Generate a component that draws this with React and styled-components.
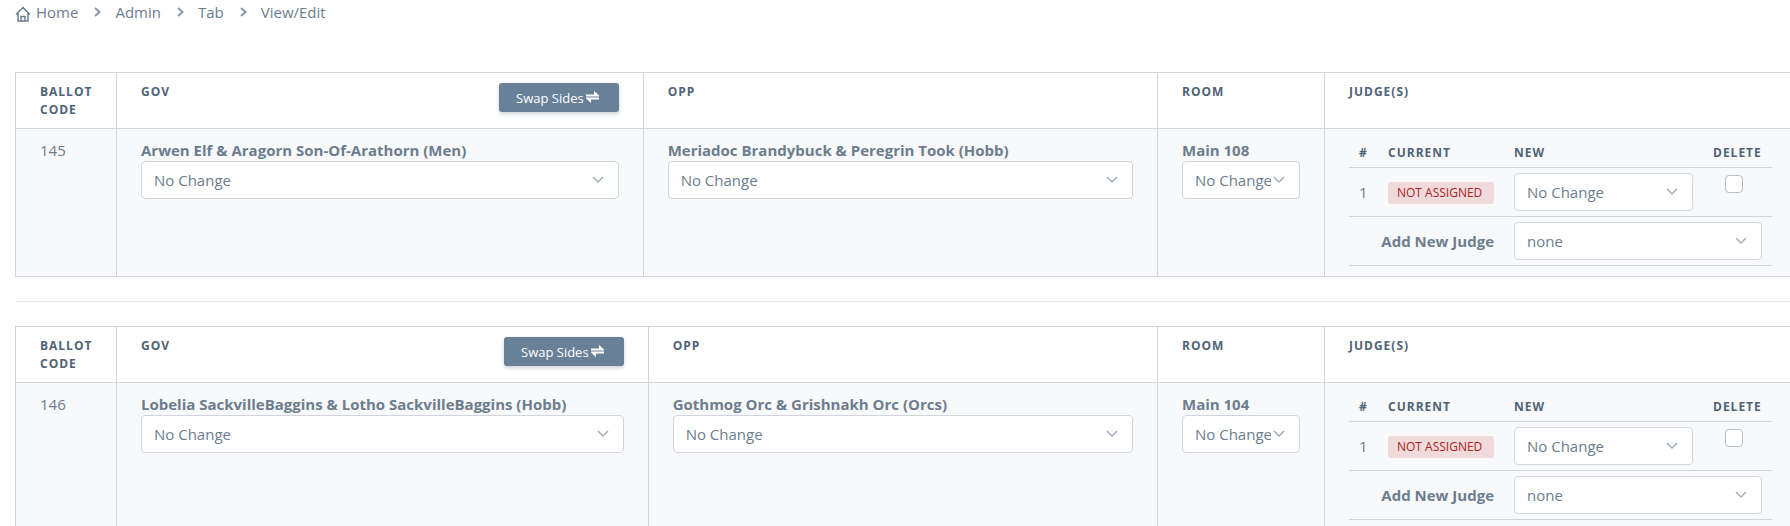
import { useId } from "react";
import styled, { createGlobalStyle } from "styled-components";

const GlobalStyle = createGlobalStyle`
  * {
    box-sizing: border-box;
  }
  body {
    margin: 0;
    overflow-x: hidden;
    background: #fff;
    color: #6c7d8e;
    font-family: "Open Sans", sans-serif;
    font-size: 15px;
    line-height: 22px;
  }
`;

const Page = styled.main`
  padding-left: 15px;
  margin-right: -7px;
`;

const Breadcrumb = styled.nav`
  padding: 1px 0 49px;
`;

const Crumbs = styled.ol`
  display: flex;
  align-items: center;
  gap: 14px;
  margin: 0;
  padding: 0;
  list-style: none;
`;

const Crumb = styled.li`
  display: flex;
  align-items: center;
  gap: 15px;
`;

const CrumbLink = styled.a`
  display: flex;
  align-items: center;
  gap: 5px;
  color: inherit;
  text-decoration: none;
  &:hover {
    text-decoration: underline;
  }
`;

const HomeSvg = styled.svg`
  width: 16px;
  height: 16px;
  margin-top: 3px;
`;

const SeparatorSvg = styled.svg`
  width: 8px;
  height: 10px;
  color: #8a97a5;
`;

const Divider = styled.hr`
  height: 1px;
  margin: 24px 0;
  border: 0;
  background: #e6e8ea;
`;

const PairingTable = styled.table`
  width: 100%;
  table-layout: fixed;
  border-collapse: collapse;
`;

const Col = styled.col`
  width: ${(props) => props.$width || "auto"};
`;

const HeadCell = styled.th`
  padding: 10px 24px 9px;
  border: 1px solid #d1d4db;
  color: #4f6378;
  font-size: 12px;
  font-weight: 700;
  line-height: 18px;
  letter-spacing: 1px;
  text-align: left;
  text-transform: uppercase;
  vertical-align: top;
`;

const HeadRow = styled.div`
  display: flex;
  align-items: flex-start;
  justify-content: space-between;
`;

const BodyCell = styled.td`
  padding: 10px 24px;
  border: 1px solid #d1d4db;
  background: #f8f9fb;
  vertical-align: top;
`;

const Label = styled.label`
  display: block;
  font-weight: 700;
`;

const SwapButton = styled.button`
  display: flex;
  align-items: center;
  gap: 2px;
  padding: 6px 20px 4px 17px;
  border: 0;
  border-radius: 3px;
  background: #698099;
  box-shadow: 0 2px 4px rgba(60, 80, 100, 0.25);
  color: #fff;
  font-family: inherit;
  font-size: 13px;
  font-weight: 500;
  line-height: 19px;
  cursor: pointer;
  &:hover {
    background: #5b7189;
  }
`;

const SwapSvg = styled.svg`
  width: 13px;
  height: 12px;
  margin-bottom: 4px;
`;

const SelectWrap = styled.div`
  display: grid;
  align-items: center;
`;

const SelectBox = styled.select`
  grid-area: 1 / 1;
  width: 100%;
  height: 38px;
  padding: 0 28px 0 12px;
  border: 1px solid #d1d4db;
  border-radius: 4px;
  appearance: none;
  background: #fff;
  color: inherit;
  font-family: inherit;
  font-size: 15px;
`;

const SelectArrow = styled.svg`
  grid-area: 1 / 1;
  justify-self: end;
  width: 12px;
  height: 8px;
  margin-right: 15px;
  color: #a3adb9;
  pointer-events: none;
`;

const JudgeTable = styled.table`
  width: 100%;
  table-layout: fixed;
  border-collapse: separate;
  border-spacing: 0;
`;

const JudgeHead = styled.th`
  padding: 5px 0 5px 10px;
  border-bottom: 1px solid #d1d4db;
  color: #4f6378;
  font-size: 12px;
  font-weight: 700;
  line-height: 18px;
  letter-spacing: 1px;
  text-align: left;
  text-transform: uppercase;
`;

const JudgeCell = styled.td`
  padding: 5px 10px;
  border-bottom: 1px solid #d1d4db;
`;

const BadgeCell = styled(JudgeCell)`
  padding-top: 7px;
`;

const DeleteCell = styled(JudgeCell)`
  padding: 7px 0 0 22px;
  vertical-align: top;
`;

const AddLabelCell = styled(JudgeCell).attrs({ as: "th", scope: "row" })`
  text-align: right;
`;

const Badge = styled.span`
  display: block;
  padding: 0 9px;
  border-radius: 3px;
  background: #f0dada;
  color: #ab1f26;
  font-size: 12px;
  line-height: 22px;
  text-transform: uppercase;
  white-space: nowrap;
`;

const Checkbox = styled.input`
  display: block;
  width: 18px;
  height: 18px;
  margin: 0;
  border: 1px solid #b5bdc9;
  border-radius: 4px;
  appearance: none;
  background: #fff;
  &:checked {
    background: #698099;
  }
`;

const crumbs = ["Home", "Admin", "Tab", "View/Edit"];

const pairings = [
  {
    code: 145,
    gov: "Arwen Elf & Aragorn Son-Of-Arathorn (Men)",
    opp: "Meriadoc Brandybuck & Peregrin Took (Hobb)",
    room: "Main 108",
    govWidth: "29.57%",
  },
  {
    code: 146,
    gov: "Lobelia SackvilleBaggins & Lotho SackvilleBaggins (Hobb)",
    opp: "Gothmog Orc & Grishnakh Orc (Orcs)",
    room: "Main 104",
    govWidth: "29.85%",
  },
];

function HomeIcon() {
  return (
    <HomeSvg viewBox="0 0 16 16" fill="none" stroke="currentColor" strokeWidth="1.5" aria-hidden="true">
      <path d="M1 8.5 8 1.5l7 7M3 7v8h10V7M6 15v-4.500h4V15" />
    </HomeSvg>
  );
}

function SeparatorIcon() {
  return (
    <SeparatorSvg viewBox="0 0 8 10" fill="none" stroke="currentColor" strokeWidth="2" aria-hidden="true">
      <path d="m2 1 4.500 4L2 9" />
    </SeparatorSvg>
  );
}

function SwapIcon() {
  return (
    <SwapSvg viewBox="0 0 13 12" fill="currentColor" aria-hidden="true">
      <path d="M0 3.500h8V0l5 4.500v1H0zM13 8.500H5V12L0 7.500v-1h13z" />
    </SwapSvg>
  );
}

function Select({ id, label, option = "No Change" }) {
  return (
    <SelectWrap>
      <SelectBox id={id} aria-label={label}>
        <option>{option}</option>
      </SelectBox>
      <SelectArrow viewBox="0 0 12 8" fill="none" stroke="currentColor" strokeWidth="1.500" aria-hidden="true">
        <path d="m1 1 5 5 5-5" />
      </SelectArrow>
    </SelectWrap>
  );
}

function Field({ name }) {
  const id = useId();
  return (
    <>
      <Label htmlFor={id}>{name}</Label>
      <Select id={id} />
    </>
  );
}

function Judges() {
  const addId = useId();
  return (
    <JudgeTable>
      <colgroup>
        <Col $width="29px" />
        <Col $width="126px" />
        <Col />
        <Col $width="69px" />
      </colgroup>
      <thead>
        <tr>
          <JudgeHead>#</JudgeHead>
          <JudgeHead>Current</JudgeHead>
          <JudgeHead>New</JudgeHead>
          <JudgeHead>Delete</JudgeHead>
        </tr>
      </thead>
      <tbody>
        <tr>
          <JudgeCell>1</JudgeCell>
          <BadgeCell>
            <Badge>Not Assigned</Badge>
          </BadgeCell>
          <JudgeCell>
            <Select label="New judge 1" />
          </JudgeCell>
          <DeleteCell>
            <Checkbox type="checkbox" aria-label="Delete judge 1" />
          </DeleteCell>
        </tr>
        <tr>
          <AddLabelCell colSpan={2}>
            <Label htmlFor={addId}>Add New Judge</Label>
          </AddLabelCell>
          <JudgeCell colSpan={2}>
            <Select id={addId} option="none" />
          </JudgeCell>
        </tr>
      </tbody>
    </JudgeTable>
  );
}

function Pairing({ pairing }) {
  return (
    <PairingTable>
      <colgroup>
        <Col $width="101px" />
        <Col $width={pairing.govWidth} />
        <Col />
        <Col $width="167px" />
        <Col $width="472px" />
      </colgroup>
      <thead>
        <tr>
          <HeadCell>Ballot Code</HeadCell>
          <HeadCell>
            <HeadRow>
              Gov
              <SwapButton type="button">
                Swap Sides
                <SwapIcon />
              </SwapButton>
            </HeadRow>
          </HeadCell>
          <HeadCell>Opp</HeadCell>
          <HeadCell>Room</HeadCell>
          <HeadCell>Judge(s)</HeadCell>
        </tr>
      </thead>
      <tbody>
        <tr>
          <BodyCell>{pairing.code}</BodyCell>
          <BodyCell>
            <Field name={pairing.gov} />
          </BodyCell>
          <BodyCell>
            <Field name={pairing.opp} />
          </BodyCell>
          <BodyCell>
            <Field name={pairing.room} />
          </BodyCell>
          <BodyCell>
            <Judges />
          </BodyCell>
        </tr>
      </tbody>
    </PairingTable>
  );
}

export default function App() {
  return (
    <>
      <GlobalStyle />
      <Page>
        <Breadcrumb aria-label="Breadcrumb">
          <Crumbs>
            {crumbs.map((crumb, index) => (
              <Crumb key={crumb}>
                <CrumbLink href="#">
                  {index === 0 && <HomeIcon />}
                  {crumb}
                </CrumbLink>
                {index < crumbs.length - 1 && <SeparatorIcon />}
              </Crumb>
            ))}
          </Crumbs>
        </Breadcrumb>
        {pairings.map((pairing, index) => (
          <div key={pairing.code}>
            {index > 0 && <Divider />}
            <Pairing pairing={pairing} />
          </div>
        ))}
      </Page>
    </>
  );
}
